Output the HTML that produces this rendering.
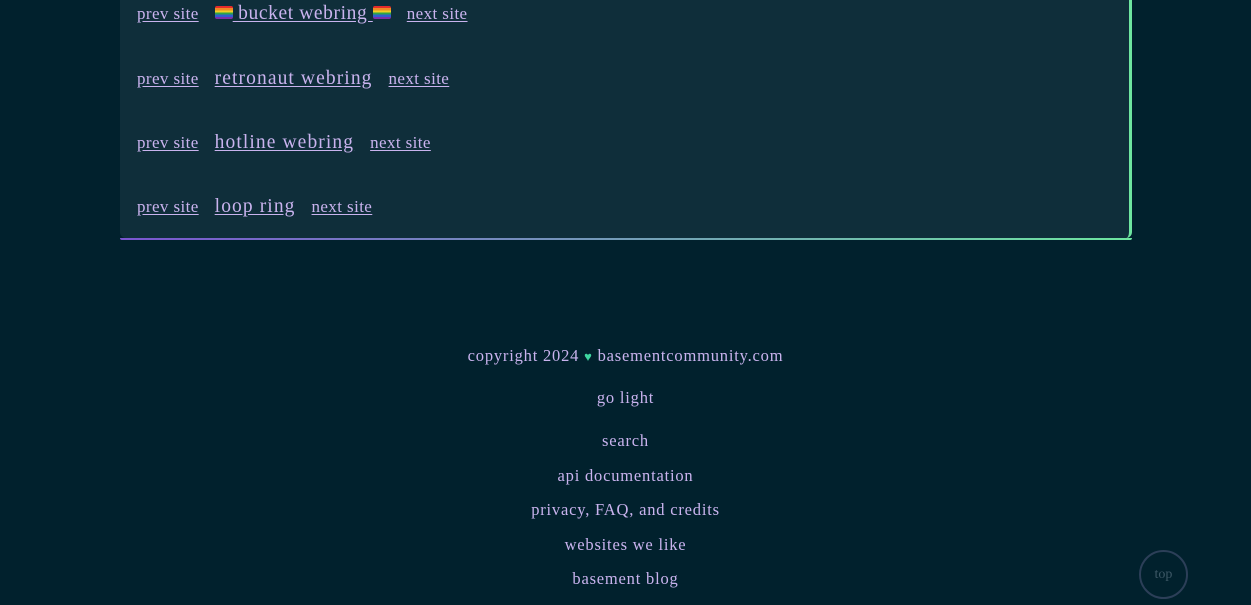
<!DOCTYPE html>
<html><head><style>
html,body{margin:0;padding:0;}
body{width:1251px;height:605px;overflow:hidden;background:#01212d;font-family:"Liberation Serif",serif;color:#c9b3ee;position:relative;}
.card{position:absolute;left:120px;top:-20px;width:1009px;height:258px;background:#0f2e3a;border-radius:0 0 6px 6px;border-right:3px solid #6ee6a0;}
.card:after{content:"";position:absolute;left:0;right:-3px;bottom:-2px;height:2px;background:linear-gradient(90deg,#7a55d0,#6ee6a0);border-radius:0 0 6px 6px;}
.row{position:absolute;left:17px;white-space:nowrap;}
.row a{color:#c9b3ee;text-decoration:underline;text-underline-offset:2px;}
.s{font-size:17px;letter-spacing:0.4px;}
.t{font-size:19.5px;letter-spacing:1.1px;margin:0 16px 0 16px;}
.b{letter-spacing:0.6px;}
.flag{display:inline-block;width:18px;height:13px;border-radius:2px;vertical-align:0px;background:linear-gradient(#e52b2b 0 17%,#f08a24 17% 34%,#f0d024 34% 50%,#2ea44a 50% 67%,#2f5fd0 67% 84%,#7a2fa8 84%);}
.f{position:absolute;left:0;width:1251px;text-align:center;font-size:16.5px;letter-spacing:0.8px;}
.top{position:absolute;left:1139px;top:550px;width:45px;height:45px;border:2px solid #2c3f58;border-radius:50%;color:#3d5866;font-size:14px;text-align:center;line-height:45px;}
</style></head><body>
<div class="card">
<div class="row" style="top:23px"><a class="s">prev site</a><a class="t b"><span class="flag"></span> bucket webring <span class="flag"></span></a><a class="s">next site</a></div>
<div class="row" style="top:88px"><a class="s">prev site</a><a class="t">retronaut webring</a><a class="s">next site</a></div>
<div class="row" style="top:152px"><a class="s">prev site</a><a class="t">hotline webring</a><a class="s">next site</a></div>
<div class="row" style="top:216px"><a class="s">prev site</a><a class="t">loop ring</a><a class="s">next site</a></div>
</div>
<div class="f" style="top:346px">copyright 2024 <span style="color:#3ed6a0;font-size:13px">♥</span> basementcommunity.com</div>
<div class="f" style="top:388px">go light</div>
<div class="f" style="top:431px">search</div>
<div class="f" style="top:466px">api documentation</div>
<div class="f" style="top:500px">privacy, FAQ, and credits</div>
<div class="f" style="top:535px">websites we like</div>
<div class="f" style="top:569px">basement blog</div>
<div class="top">top</div>
</body></html>
